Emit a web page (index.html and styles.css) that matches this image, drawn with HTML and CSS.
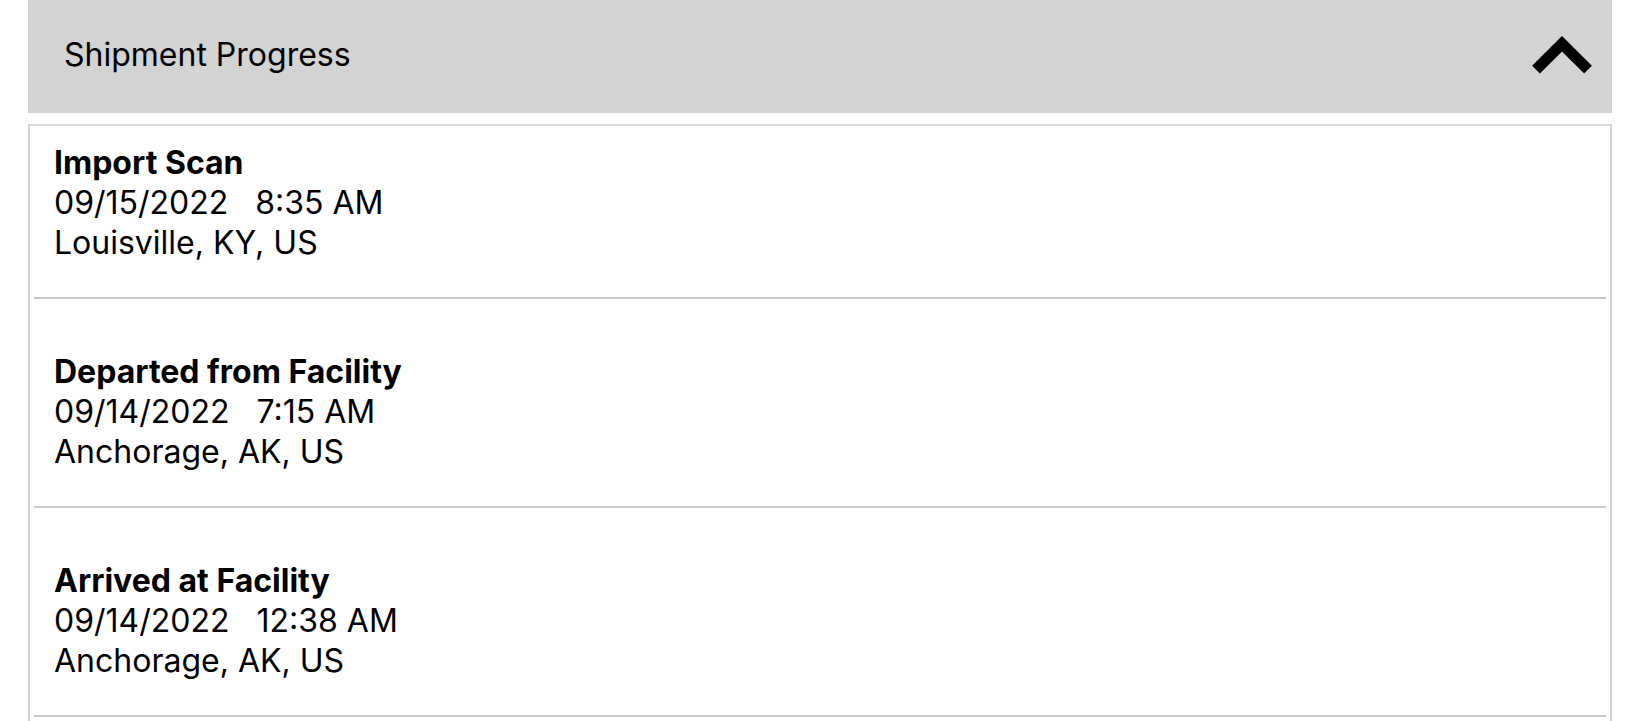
FILE: index.html
```html
<!DOCTYPE html>
<html lang="en">
<head>
<meta charset="utf-8">
<title>Shipment Progress</title>
<link rel="stylesheet" href="styles.css">
</head>
<body>
<div class="page">
  <div class="panel-header">
    <span class="panel-title">Shipment Progress</span>
    <svg class="chevron" width="64" height="48" viewBox="0 0 64 48" aria-hidden="true">
      <polyline points="6,38.7 32,12.8 58,38.7" fill="none" stroke="#000" stroke-width="11" stroke-linejoin="miter" stroke-linecap="butt"/>
    </svg>
  </div>
  <div class="card">
    <div class="event event-first">
      <div class="event-title">Import Scan</div>
      <div class="event-line"><span>09/15/2022</span><span class="time">8:35 AM</span></div>
      <div class="event-line">Louisville, KY, US</div>
    </div>
    <div class="event">
      <div class="event-title">Departed from Facility</div>
      <div class="event-line"><span>09/14/2022</span><span class="time">7:15 AM</span></div>
      <div class="event-line">Anchorage, AK, US</div>
    </div>
    <div class="event">
      <div class="event-title">Arrived at Facility</div>
      <div class="event-line"><span>09/14/2022</span><span class="time">12:38 AM</span></div>
      <div class="event-line">Anchorage, AK, US</div>
    </div>
  </div>
</div>
</body>
</html>
```
FILE: styles.css
```css
html, body {
  margin: 0;
  padding: 0;
  background: #ffffff;
}

body {
  font-family: Inter, "Liberation Sans", Arial, sans-serif;
  color: #000;
}

.page {
  padding: 0 28px;
}

.panel-header {
  height: 113px;
  background: #d3d3d3;
  display: flex;
  align-items: center;
  justify-content: space-between;
  padding: 0 18px 0 36px;
  box-sizing: border-box;
}

.panel-title {
  font-size: 32px;
  line-height: 40px;
  margin-top: -4px;
}

.chevron {
  display: block;
  margin-bottom: 3px;
}

.card {
  margin-top: 11px;
  border: 2px solid #d6d6d6;
  padding-bottom: 30px;
}

.event {
  margin: 0 4px;
  padding: 53px 0 34px 20px;
  border-bottom: 2px solid #ccc8c2;
  font-size: 32px;
  line-height: 40px;
}

.event-first {
  padding-top: 17px;
  padding-bottom: 34px;
}

.event-title {
  font-weight: 700;
}

.time {
  margin-left: 27px;
}
```
